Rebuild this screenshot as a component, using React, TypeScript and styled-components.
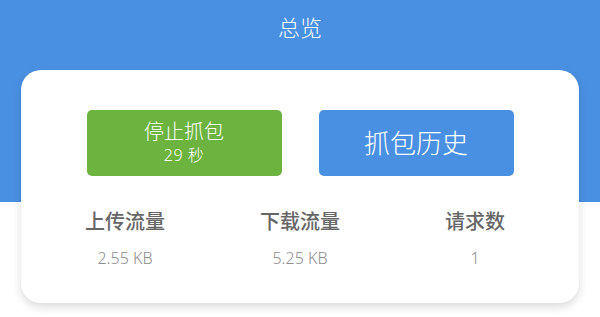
import styled, { createGlobalStyle } from "styled-components";

const GlobalStyle = createGlobalStyle`
  html, body {
    margin: 0;
    padding: 0;
    background: #ffffff;
  }
  body {
    font-family: "Noto Sans", "Noto Sans CJK SC", sans-serif;
  }
`;

const stats = [
  { label: "上传流量", value: "2.55 KB" },
  { label: "下载流量", value: "5.25 KB" },
  { label: "请求数", value: "1" },
];

export default function App() {
  return (
    <>
      <GlobalStyle />
      <Page>
        <Title>总览</Title>
        <Card>
          <ButtonRow>
            <ActionButton $color="#6cb33f">
              <ButtonMain>停止抓包</ButtonMain>
              <ButtonSub>29 秒</ButtonSub>
            </ActionButton>
            <ActionButton $color="#4a90e2">
              <ButtonLarge>抓包历史</ButtonLarge>
            </ActionButton>
          </ButtonRow>
          <StatGrid>
            {stats.map((s) => (
              <Stat key={s.label}>
                <StatLabel>{s.label}</StatLabel>
                <StatValue>{s.value}</StatValue>
              </Stat>
            ))}
          </StatGrid>
        </Card>
      </Page>
    </>
  );
}

const Page = styled.div`
  width: 600px;
  height: 317px;
  overflow: hidden;
  background: linear-gradient(#4a90e2 0, #4a90e2 202px, #ffffff 202px);
  display: flex;
  flex-direction: column;
`;

const Title = styled.div`
  height: 54px;
  line-height: 54px;
  margin-bottom: 16px;
  text-align: center;
  font-size: 22px;
  font-weight: 300;
  color: #ffffff;
`;

const Card = styled.div`
  margin: 0 21px;
  height: 233px;
  box-sizing: border-box;
  padding-top: 40px;
  background: #ffffff;
  border-radius: 20px;
  box-shadow: 0 4px 10px rgba(0, 0, 0, 0.14);
  display: flex;
  flex-direction: column;
  align-items: center;
`;

const ButtonRow = styled.div`
  display: flex;
  gap: 37px;
`;

const ActionButton = styled.div<{ $color: string }>`
  width: 195px;
  height: 66px;
  border-radius: 5px;
  background: ${(p) => p.$color};
  color: #ffffff;
  font-weight: 300;
  display: flex;
  flex-direction: column;
  align-items: center;
  justify-content: center;
`;

const ButtonMain = styled.div`
  font-size: 20px;
  line-height: 26px;
  margin-top: -2px;
`;

const ButtonSub = styled.div`
  font-size: 16px;
  line-height: 20px;
  letter-spacing: 0.5px;
`;

const ButtonLarge = styled.div`
  font-size: 26px;
  line-height: 32px;
`;

const StatGrid = styled.div`
  margin-top: 32px;
  display: grid;
  grid-template-columns: repeat(3, 175px);
`;

const Stat = styled.div`
  display: flex;
  flex-direction: column;
  align-items: center;
  gap: 11px;
`;

const StatLabel = styled.div`
  font-size: 20px;
  line-height: 28px;
  font-weight: 500;
  color: #666666;
`;

const StatValue = styled.div`
  font-size: 16px;
  line-height: 22px;
  font-weight: 300;
  color: #8c8c8c;
`;
